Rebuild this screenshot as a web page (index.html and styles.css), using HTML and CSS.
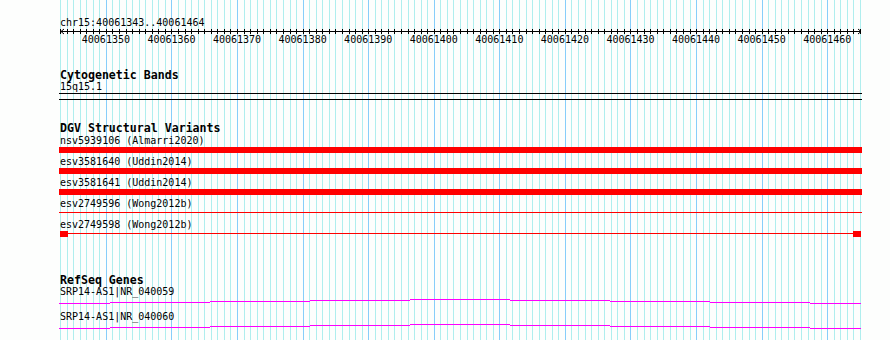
FILE: index.html
```html
<!DOCTYPE html>
<html lang="en">
<head>
    <meta charset="UTF-8">
    <title>chr15:40061343..40061464</title>
    <link rel="stylesheet" href="styles.css">
</head>
<body>
    <div class="view">
        <!-- 碱基网格线，由脚本生成 -->
        <svg class="grid" id="grid" width="803" height="340"></svg>
        <div class="tracks">
            <div class="label">chr15:40061343..40061464</div>
            <svg class="ruler" id="ruler" width="803" height="20"></svg>

            <div class="track-title cyto-title">Cytogenetic Bands</div>
            <div class="label">15q15.1</div>
            <div class="band"></div>

            <div class="track-title dgv-title">DGV Structural Variants</div>
            <div class="variant first">
                <div class="label">nsv5939106 (Almarri2020)</div>
                <div class="feat bar"></div>
            </div>
            <div class="variant">
                <div class="label">esv3581640 (Uddin2014)</div>
                <div class="feat bar"></div>
            </div>
            <div class="variant">
                <div class="label">esv3581641 (Uddin2014)</div>
                <div class="feat bar"></div>
            </div>
            <div class="variant">
                <div class="label">esv2749596 (Wong2012b)</div>
                <div class="feat thin"></div>
            </div>
            <div class="variant">
                <div class="label">esv2749598 (Wong2012b)</div>
                <div class="feat ends"><span class="exon"></span><span class="exon"></span></div>
            </div>

            <div class="track-title gene-title">RefSeq Genes</div>
            <div class="gene">
                <div class="label">SRP14-AS1|NR_040059</div>
                <svg class="gene-line" width="803" height="14"></svg>
            </div>
            <div class="gene">
                <div class="label">SRP14-AS1|NR_040060</div>
                <svg class="gene-line" width="803" height="14"></svg>
            </div>
        </div>
    </div>
    <script>
        const NS = 'http://www.w3.org/2000/svg';
        const START = 40061343;
        const BASES = 122;
        const STEP = 800 / BASES;

        function el(name, attrs) {
            let node = document.createElementNS(NS, name);
            for (let key in attrs) {
                node.setAttribute(key, attrs[key]);
            }
            return node;
        }

        // 网格线：每个碱基一条，每10个碱基一条深色
        let grid = document.getElementById('grid');
        let ruler = document.getElementById('ruler');
        for (let k = 0; k <= BASES; k++) {
            let x = Math.round(1 + k * STEP) + 0.5;
            let major = (START + k) % 10 === 0;
            grid.appendChild(el('line', {x1: x, x2: x, y1: 0, y2: 340, class: major ? 'major' : 'minor'}));
            ruler.appendChild(el('line', {x1: x, x2: x, y1: 1, y2: 6, class: 'tick'}));
            if (major) {
                let t = el('text', {x: 1 + k * STEP, y: 15, 'text-anchor': 'middle'});
                t.textContent = START + k;
                ruler.appendChild(t);
            }
        }
        ruler.appendChild(el('line', {x1: 1, x2: 802, y1: 3.5, y2: 3.5, class: 'tick'}));
        ruler.appendChild(el('path', {d: 'M5 1 L2 3.5 L5 6', class: 'arrow'}));
        ruler.appendChild(el('path', {d: 'M799 1 L802 3.5 L799 6', class: 'arrow'}));

        // 基因线：阶梯状的细线
        let steps = [0, 51, 151, 251, 351, 451, 551, 651, 751, 802];
        let levels = [6, 5, 4, 3, 2, 3, 4, 5, 6];
        let genes = document.getElementsByClassName('gene-line');
        for (let i = 0; i < genes.length; i++) {
            for (let s = 0; s < levels.length; s++) {
                genes[i].appendChild(el('rect', {x: steps[s], y: levels[s], width: steps[s + 1] - steps[s], height: 1}));
            }
        }
    </script>
</body>
</html>
```

FILE: styles.css
```css
*{
    margin: 0;
    padding: 0;
}
body{
    background-color: #fdfefd;
    font-family: "DejaVu Sans Mono", monospace;
    font-size: 10px;
    color: #000;
}
.view{
    position: relative;
    width: 803px;
    height: 340px;
    margin-left: 59px;
}
.grid{
    position: absolute;
    left: 0;
    top: 0;
    shape-rendering: crispEdges;
}
.grid .minor{
    stroke: #afeeee;
}
.grid .major{
    stroke: #87cefa;
}
.tracks{
    position: relative;
    z-index: 1;
    padding-top: 17px;
}
.label{
    padding-left: 1px;
    line-height: 11px;
    white-space: nowrap;
}
.ruler{
    display: block;
    font-family: "DejaVu Sans Mono", monospace;
    font-size: 10px;
}
.ruler .tick{
    stroke: #000;
    shape-rendering: crispEdges;
}
.ruler .arrow{
    stroke: #000;
    fill: none;
}
/* 标题下移1px，对齐基线 */
.track-title{
    padding-top: 1px;
    padding-left: 1px;
    font-size: 11.6px;
    font-weight: bold;
    line-height: 12px;
}
.cyto-title{
    margin-top: 20px;
}
.band{
    height: 5px;
    margin-top: 1px;
    border-top: 1px solid #000;
    border-bottom: 1px solid #000;
}
.dgv-title{
    margin-top: 21px;
}
.variant{
    padding-bottom: 3px;
}
.variant.first{
    margin-top: 1px;
}
.variant .label{
    margin-bottom: 1px;
}
.feat{
    height: 6px;
}
.bar{
    background-color: #f00;
}
.thin{
    height: 2px;
    border-bottom: 1px solid #f00;
    margin-bottom: 3px;
}
.ends{
    display: flex;
    justify-content: space-between;
    width: 801px;
    margin-left: 1px;
    background: linear-gradient(#f00, #f00) 0 2px / 100% 1px no-repeat;
}
.exon{
    width: 8px;
    height: 6px;
    background-color: #f00;
}
.gene-title{
    margin-top: 33px;
}
.gene-line{
    display: block;
    fill: #f0f;
    shape-rendering: crispEdges;
}
```
